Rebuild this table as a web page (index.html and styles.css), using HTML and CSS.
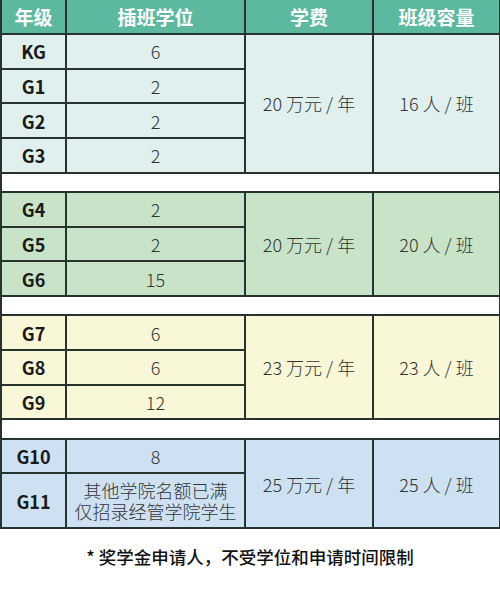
FILE: index.html
```html
<!DOCTYPE html>
<html lang="zh">
<head>
<meta charset="utf-8">
<title>插班学位</title>
<link rel="stylesheet" href="styles.css">
</head>
<body>
<div class="page">
  <table class="fees">
    <colgroup>
      <col class="c-grade"><col class="c-seats"><col class="c-fee"><col class="c-size">
    </colgroup>
    <thead>
      <tr class="head">
        <th>年级</th><th>插班学位</th><th>学费</th><th>班级容量</th>
      </tr>
    </thead>
    <tbody>
      <tr class="g1 r35"><td class="grade">KG</td><td>6</td><td rowspan="4">20 万元 / 年</td><td rowspan="4">16 人 / 班</td></tr>
      <tr class="g1 r35"><td class="grade">G1</td><td>2</td></tr>
      <tr class="g1 r35"><td class="grade">G2</td><td>2</td></tr>
      <tr class="g1 r35"><td class="grade">G3</td><td>2</td></tr>
      <tr class="gap"><td colspan="4"></td></tr>
      <tr class="g2 r35"><td class="grade">G4</td><td>2</td><td rowspan="3">20 万元 / 年</td><td rowspan="3">20 人 / 班</td></tr>
      <tr class="g2 r35"><td class="grade">G5</td><td>2</td></tr>
      <tr class="g2 r35"><td class="grade">G6</td><td>15</td></tr>
      <tr class="gap"><td colspan="4"></td></tr>
      <tr class="g3 r35"><td class="grade">G7</td><td>6</td><td rowspan="3">23 万元 / 年</td><td rowspan="3">23 人 / 班</td></tr>
      <tr class="g3 r35"><td class="grade">G8</td><td>6</td></tr>
      <tr class="g3 r35"><td class="grade">G9</td><td>12</td></tr>
      <tr class="gap"><td colspan="4"></td></tr>
      <tr class="g4 r35"><td class="grade">G10</td><td>8</td><td rowspan="2">25 万元 / 年</td><td rowspan="2">25 人 / 班</td></tr>
      <tr class="g4 r56"><td class="grade">G11</td><td class="note"><span class="line">其他学院名额已满</span><span class="line">仅招录经管学院学生</span></td></tr>
    </tbody>
  </table>
  <p class="footnote">* 奖学金申请人，不受学位和申请时间限制</p>
</div>
</body>
</html>
```

FILE: styles.css
```css
html, body {
  margin: 0;
  padding: 0;
  background: #ffffff;
}
body {
  font-family: "Noto Sans CJK SC", "Noto Sans", sans-serif;
  color: #333333;
}
.page {
  width: 500px;
}
.fees {
  width: 499px;
  border-collapse: collapse;
  table-layout: fixed;
}
.c-grade { width: 65px; }
.c-seats { width: 179px; }
.c-fee { width: 128px; }
.c-size { width: 127px; }

.fees th, .fees td {
  padding: 0;
  text-align: center;
  vertical-align: middle;
  border: 2px solid #27332f;
}
.fees td {
  font-size: 18px;
  font-weight: 300;
  line-height: 20px;
}
.head th {
  height: 33px;
  background: #5cb9a0;
  color: #ffffff;
  font-size: 19px;
  font-weight: 700;
  line-height: 22px;
  border-top: none;
}
.r35 { height: 34.7px; }
.r56 { height: 55px; }
.gap td { height: 17.3px; background: #ffffff; }
.fees td.grade {
  font-weight: 700;
  color: #1a1a1a;
  font-size: 18px;
}
.fees td.note {
  font-size: 18px;
  line-height: 21px;
  padding: 2px 0;
}
.note .line {
  display: block;
}
.g1 td { background: #dff0ee; }
.g2 td { background: #c9e3c8; }
.g3 td { background: #f8f7d7; }
.g4 td { background: #cde1f3; }

.footnote {
  margin: 16px 0 0;
  text-align: center;
  font-size: 17.5px;
  line-height: 24px;
  font-weight: 500;
  color: #111111;
}
```
